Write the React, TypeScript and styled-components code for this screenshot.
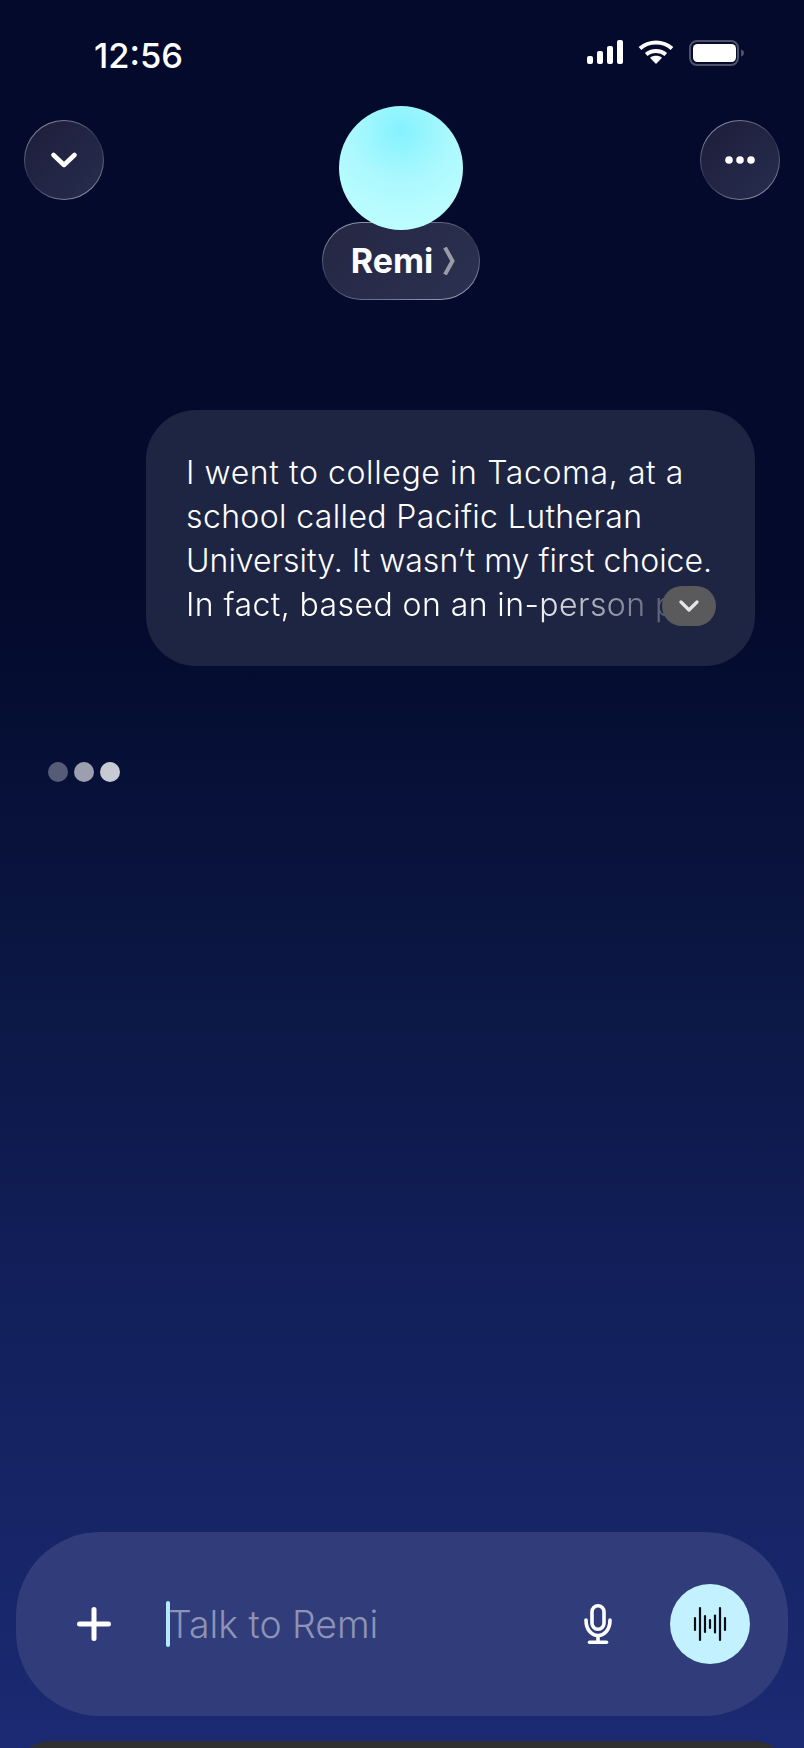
import React from "react";
import styled, { createGlobalStyle } from "styled-components";

const GlobalStyle = createGlobalStyle`
	html, body {
		margin: 0;
		padding: 0;
		background: #030a2c;
	}
	* {
		box-sizing: border-box;
	}
`;

const App: React.FC = () => {
	return (
		<Screen>
			<GlobalStyle />
			<StatusBar>
				<Clock>12:56</Clock>
				<StatusIcons>
					<svg width="36" height="24" viewBox="0 0 36 24" fill="#fff">
						<rect x="0" y="16" width="6" height="8" rx="2" />
						<rect x="10" y="11" width="6" height="13" rx="2" />
						<rect x="20" y="6" width="6" height="18" rx="2" />
						<rect x="30" y="0" width="6" height="24" rx="2" />
					</svg>
					<svg width="36" height="24" viewBox="0 0 36 24" fill="none" stroke="#fff" strokeWidth="4">
						<path d="M2 8.6C11 0.6 25 0.6 34 8.6" />
						<path d="M8.2 14.4C13.6 9.8 22.4 9.8 27.8 14.4" />
						<path d="M18 24l-6-6.2c3.4-2.6 8.6-2.6 12 0z" fill="#fff" stroke="none" />
					</svg>
					<svg width="56" height="26" viewBox="0 0 56 26" fill="none">
						<rect x="1" y="1" width="48" height="24" rx="7" stroke="#4d5269" strokeWidth="2" />
						<rect x="4" y="4" width="43" height="18" rx="4.5" fill="#fff" />
						<path d="M52 9.5c1.8.5 3 1.900 3 3.500s-1.200 3-3 3.500z" fill="#4d5269" />
					</svg>
				</StatusIcons>
			</StatusBar>

			<Header>
				<RoundButton>
					<svg width="26" height="16" viewBox="0 0 26 16" fill="none" stroke="#fff" strokeWidth="4.5" strokeLinecap="round" strokeLinejoin="round">
						<path d="M2.500 3L13 13L23.500 3" />
					</svg>
				</RoundButton>
				<AgentBlock>
					<Orb />
					<NamePill>
						<AgentName>Remi</AgentName>
						<svg width="12" height="28" viewBox="0 0 12 28" fill="none" stroke="#9a9ba8" strokeWidth="4" strokeLinejoin="miter">
							<path d="M2 0.500L9.500 14L2 27.500" />
						</svg>
					</NamePill>
				</AgentBlock>
				<RoundButton>
					<svg width="30" height="8" viewBox="0 0 30 8" fill="#fff">
						<circle cx="4" cy="4" r="3.800" />
						<circle cx="15" cy="4" r="3.800" />
						<circle cx="26" cy="4" r="3.800" />
					</svg>
				</RoundButton>
			</Header>

			<Bubble>
				<Line $tracking={0.6}>I went to college in Tacoma, at a</Line>
				<Line $tracking={0.37}>school called Pacific Lutheran</Line>
				<Line $tracking={0}>University. It wasn’t my first choice.</Line>
				<FadedLine $tracking={0.42}>In fact, based on an in-person p</FadedLine>
				<ExpandButton>
					<svg width="20" height="12" viewBox="0 0 20 12" fill="none" stroke="#e6e6e6" strokeWidth="3.200" strokeLinecap="round" strokeLinejoin="round">
						<path d="M2 2L10 10L18 2" />
					</svg>
				</ExpandButton>
			</Bubble>

			<TypingDots>
				<Dot $alpha={0.32} />
				<Dot $alpha={0.6} />
				<Dot $alpha={0.78} />
			</TypingDots>

			<Composer>
				<PlusIcon>
					<svg width="34" height="34" viewBox="0 0 34 34" fill="none" stroke="#fff" strokeWidth="5" strokeLinecap="round">
						<path d="M17 2.500V31.500" />
						<path d="M2.500 17H31.500" />
					</svg>
				</PlusIcon>
				<Caret />
				<Placeholder>Talk to Remi</Placeholder>
				<MicIcon>
					<svg width="28" height="40" viewBox="0 0 28 40" fill="none" stroke="#fff" strokeWidth="3.6">
						<rect x="8" y="1.800" width="12" height="23.500" rx="6" />
						<path d="M2 16c0 9 5 15.500 12 15.500S26 25 26 16" strokeLinecap="round" />
						<path d="M14 31.500V38" />
						<path d="M5.500 38.200H22.500" strokeLinecap="round" />
					</svg>
				</MicIcon>
				<VoiceButton>
					<svg width="34" height="36" viewBox="0 0 34 36" fill="none" stroke="#0b0d14" strokeWidth="2.200" strokeLinecap="round">
						<path d="M2 12V24" />
						<path d="M7 2V34" />
						<path d="M12 10V26" />
						<path d="M17 14V22" />
						<path d="M22 9.500V26.500" />
						<path d="M27 2V34" />
						<path d="M32 12V24" />
					</svg>
				</VoiceButton>
			</Composer>

			<KeyboardEdge />
		</Screen>
	);
};

export default App;

const Screen = styled.div`
	width: 804px;
	height: 1748px;
	display: flex;
	flex-direction: column;
	overflow: hidden;
	color: #fff;
	font-family: Inter, "Liberation Sans", sans-serif;
	background: linear-gradient(
		180deg,
		#030a2c 0%,
		#030a2c 34%,
		#0b1642 55%,
		#12205c 75%,
		#1b2a72 100%
	);
`;

const StatusBar = styled.div`
	display: flex;
	justify-content: space-between;
	align-items: center;
	height: 30px;
	margin-top: 40px;
	padding: 0 59px 0 94px;
`;

const Clock = styled.div`
	padding-top: 2px;
	font-size: 34.5px;
	font-weight: 500;
	line-height: 32px;
`;

const StatusIcons = styled.div`
	display: flex;
	align-items: flex-start;
	gap: 15px;
	height: 30px;
`;

const Header = styled.div`
	display: flex;
	justify-content: space-between;
	align-items: flex-start;
	padding: 0 24px;
	margin-top: 36px;
`;

const RoundButton = styled.button`
	width: 80px;
	height: 80px;
	margin-top: 14px;
	padding: 0;
	display: flex;
	align-items: center;
	justify-content: center;
	border: 1.5px solid transparent;
	border-radius: 50%;
	background:
		linear-gradient(135deg, #1d1d3a, #272d4e) padding-box,
		linear-gradient(150deg, #8f92a8 8%, #2a2d4a 50%, #9a9eb2 95%) border-box;
`;

const AgentBlock = styled.div`
	display: flex;
	flex-direction: column;
	align-items: center;
	margin-right: 2px;
`;

const Orb = styled.div`
	position: relative;
	z-index: 1;
	width: 124px;
	height: 124px;
	border-radius: 50%;
	background: radial-gradient(circle at 50% 20%, #84f2fe 0%, #a9f8fe 40%, #bcfdff 80%);
`;

const NamePill = styled.div`
	width: 158px;
	height: 78px;
	margin-top: -8px;
	padding-left: 4px;
	display: flex;
	align-items: center;
	justify-content: center;
	gap: 10px;
	border: 1.5px solid transparent;
	border-radius: 39px;
	background:
		linear-gradient(135deg, #252743, #2b3151) padding-box,
		linear-gradient(165deg, #8f92a8 8%, #30334f 50%, #9a9eb2 95%) border-box;
`;

const AgentName = styled.span`
	margin-top: -2px;
	font-size: 34px;
	font-weight: 700;
`;

const Bubble = styled.div`
	position: relative;
	width: 609px;
	height: 256px;
	margin: 110px 49px 0 auto;
	padding: 41px 0 0 40px;
	border-radius: 50px;
	background: #1e2542;
	font-size: 32px;
	font-weight: 350;
	line-height: 44px;
`;

const Line = styled.div<{ $tracking: number }>`
	white-space: nowrap;
	letter-spacing: ${(props) => props.$tracking}px;
`;

const FadedLine = styled(Line)`
	width: 500px;
	overflow: hidden;
	mask-image: linear-gradient(90deg, #000 340px, rgba(0, 0, 0, 0.25) 480px);
`;

const ExpandButton = styled.div`
	position: absolute;
	left: 516px;
	top: 176px;
	width: 54px;
	height: 40px;
	display: flex;
	align-items: center;
	justify-content: center;
	border-radius: 20px;
	background: #5a5a5c;
`;

const TypingDots = styled.div`
	display: flex;
	gap: 6px;
	margin: 96px 0 0 48px;
`;

const Dot = styled.span<{ $alpha: number }>`
	width: 20px;
	height: 20px;
	border-radius: 50%;
	background: rgba(255, 255, 255, ${(props) => props.$alpha});
`;

const Composer = styled.div`
	display: flex;
	align-items: center;
	flex-shrink: 0;
	height: 184px;
	margin: auto 16px 0;
	padding: 0 38px 0 61px;
	border-radius: 84px;
	background: #303d7a;
`;

const PlusIcon = styled.div`
	display: flex;
	width: 34px;
	height: 34px;
`;

const Caret = styled.div`
	width: 4px;
	height: 46px;
	margin-left: 55px;
	border-radius: 2px;
	background: #b4e9ff;
`;

const Placeholder = styled.div`
	flex: 1;
	margin-left: -2px;
	font-size: 37.4px;
	font-weight: 350;
	color: #8d93b6;
`;

const MicIcon = styled.div`
	display: flex;
	margin-right: 58px;
`;

const VoiceButton = styled.div`
	width: 80px;
	height: 80px;
	display: flex;
	align-items: center;
	justify-content: center;
	border-radius: 50%;
	background: #c4f1ff;
`;

const KeyboardEdge = styled.div`
	flex-shrink: 0;
	height: 40px;
	margin: 25px 14px -33px;
	border-radius: 36px 36px 0 0;
	background: #303030;
`;
